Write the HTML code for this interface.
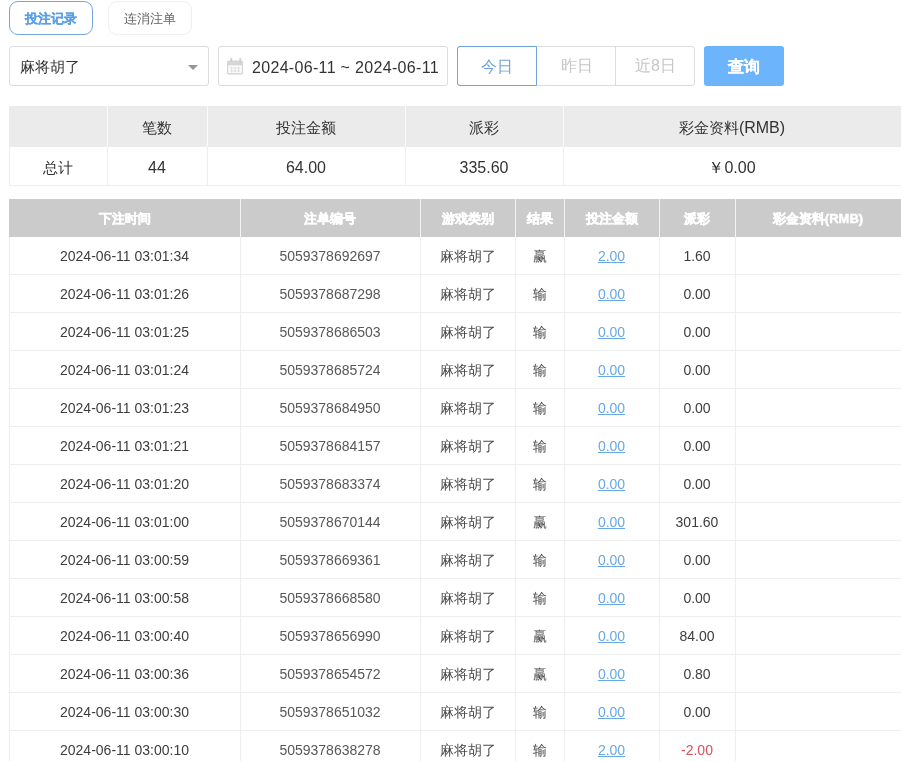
<!DOCTYPE html>
<html><head><meta charset="utf-8">
<style>
*{box-sizing:border-box;margin:0;padding:0}
html,body{width:901px;height:761px;overflow:hidden;background:#fff;}
body{will-change:transform;font-family:"Liberation Sans",sans-serif;color:#333}
.abs{position:absolute}
.tab{position:absolute;top:1px;height:34px;width:84px;border-radius:9px;text-align:center;line-height:33px;font-size:13px}
.tab1{left:9px;border:1px solid #74a6da;color:#5d9fe3;font-weight:bold;-webkit-text-stroke:0.2px #5d9fe3}
.tab2{left:108px;border:1px solid #efefef;color:#666}
.box{position:absolute;top:46px;height:40px;border:1px solid #dcdcdc;border-radius:3px;background:#fff}
.sel{left:9px;width:200px}
.sel span{position:absolute;left:10px;top:1px;line-height:38px;font-size:15px;color:#333}
.tri{position:absolute;left:178px;top:18px;width:0;height:0;border-left:5px solid transparent;border-right:5px solid transparent;border-top:5px solid #959595}
.date{left:218px;width:230px}
.date span{position:absolute;left:33px;top:2px;line-height:38px;font-size:16px;letter-spacing:0.32px;color:#333;white-space:nowrap}
.cal{position:absolute;left:8px;top:11px}
.grp{position:absolute;top:46px;left:457px;height:40px;width:238px;border:1px solid #dcdcdc;border-radius:3px}
.b{position:absolute;top:-1px;height:40px;text-align:center;line-height:39px;font-size:16px;color:#c6c6c6}
.b1{left:-1px;width:80px;border:1px solid #6fa5dc;color:#6fa5dc;border-radius:3px 0 0 3px}
.b2{left:79px;width:79px}
.b3{left:157px;width:80px;border-left:1px solid #dcdcdc}
.q{position:absolute;left:704px;top:46px;width:80px;height:40px;background:#6cb5fd;border-radius:3px;color:#fff;font-weight:bold;font-size:16px;text-align:center;line-height:41px;-webkit-text-stroke:0.3px #fff}
.sumh{background:#ebebeb}
.deth{background:#cbcbcb}
.vl,.vl-h,.vl-d{width:1px}
.vl{background:#eeeeee}
.vl-h{background:#fbfbfb}
.vl-d{background:#f4f4f4}
.hl{height:1px;background:#eeeeee}
.st{text-align:center;font-size:16px;color:#333;white-space:nowrap}
.dt{text-align:center;font-size:14px;color:#3d3d3d;white-space:nowrap;line-height:38px}
.dth{color:#fff;font-weight:bold;font-size:13px;-webkit-text-stroke:0.45px #fff;line-height:39px !important}
.dt.num{color:#585858}
.lk{color:#68a9e3;text-decoration:underline}
.dt.neg{color:#d9505a}
.st .c{font-size:15px}
.dt.cjk{font-size:13.5px;color:#4a4a4a;line-height:39px}
</style></head><body>
<div class="tab tab1">投注记录</div>
<div class="tab tab2">连消注单</div>
<div class="box sel"><span>麻将胡了</span><div class="tri"></div></div>
<div class="box date"><svg class="cal" width="16" height="17" viewBox="0 0 16 17"><rect x="0" y="2.5" width="16" height="14" rx="1.5" fill="#d6d6d6"/><rect x="1.3" y="7.4" width="13.4" height="7.6" fill="#fff"/><g fill="#e2e2e2"><rect x="4" y="8.5" width="1.2" height="6"/><rect x="7.5" y="8.5" width="1.2" height="6"/><rect x="11" y="8.5" width="1.2" height="6"/><rect x="2.5" y="9.5" width="11" height="1"/><rect x="2.5" y="12.5" width="11" height="1"/></g><rect x="3.3" y="0" width="2" height="4.5" rx="1" fill="#d0d0d0"/><rect x="12.3" y="0" width="2" height="4.5" rx="1" fill="#d0d0d0"/></svg><span>2024-06-11 ~ 2024-06-11</span></div>
<div class="grp"><div class="b b1">今日</div><div class="b b2">昨日</div><div class="b b3">近8日</div></div>
<div class="q">查询</div>

<div class="abs sumh" style="left:9px;top:106px;width:892px;height:41px"></div>
<div class="abs vl-h" style="left:107px;top:106px;height:41px"></div>
<div class="abs vl" style="left:107px;top:147px;height:39px"></div>
<div class="abs vl-h" style="left:207px;top:106px;height:41px"></div>
<div class="abs vl" style="left:207px;top:147px;height:39px"></div>
<div class="abs vl-h" style="left:405px;top:106px;height:41px"></div>
<div class="abs vl" style="left:405px;top:147px;height:39px"></div>
<div class="abs vl-h" style="left:563px;top:106px;height:41px"></div>
<div class="abs vl" style="left:563px;top:147px;height:39px"></div>
<div class="abs vl" style="left:9px;top:147px;height:39px"></div>
<div class="abs hl" style="left:9px;top:185px;width:892px"></div>
<div class="abs st str" style="left:9px;top:147px;width:98px;height:39px;line-height:41px"><span class="c">总计</span></div>
<div class="abs st sth" style="left:107px;top:106px;width:100px;height:41px;line-height:43px"><span class="c">笔数</span></div>
<div class="abs st str" style="left:107px;top:147px;width:100px;height:39px;line-height:41px">44</div>
<div class="abs st sth" style="left:207px;top:106px;width:198px;height:41px;line-height:43px"><span class="c">投注金额</span></div>
<div class="abs st str" style="left:207px;top:147px;width:198px;height:39px;line-height:41px">64.00</div>
<div class="abs st sth" style="left:405px;top:106px;width:158px;height:41px;line-height:43px"><span class="c">派彩</span></div>
<div class="abs st str" style="left:405px;top:147px;width:158px;height:39px;line-height:41px">335.60</div>
<div class="abs st sth" style="left:563px;top:106px;width:338px;height:41px;line-height:43px"><span class="c">彩金资料</span>(RMB)</div>
<div class="abs st str" style="left:563px;top:147px;width:338px;height:39px;line-height:41px">￥0.00</div>
<div class="abs deth" style="left:9px;top:199px;width:892px;height:38px"></div>
<div class="abs vl-d" style="left:240px;top:199px;height:38px"></div>
<div class="abs vl" style="left:240px;top:237px;height:524px"></div>
<div class="abs vl-d" style="left:420px;top:199px;height:38px"></div>
<div class="abs vl" style="left:420px;top:237px;height:524px"></div>
<div class="abs vl-d" style="left:515px;top:199px;height:38px"></div>
<div class="abs vl" style="left:515px;top:237px;height:524px"></div>
<div class="abs vl-d" style="left:564px;top:199px;height:38px"></div>
<div class="abs vl" style="left:564px;top:237px;height:524px"></div>
<div class="abs vl-d" style="left:659px;top:199px;height:38px"></div>
<div class="abs vl" style="left:659px;top:237px;height:524px"></div>
<div class="abs vl-d" style="left:735px;top:199px;height:38px"></div>
<div class="abs vl" style="left:735px;top:237px;height:524px"></div>
<div class="abs vl" style="left:9px;top:237px;height:524px"></div>
<div class="abs hl" style="left:9px;top:274px;width:892px"></div>
<div class="abs hl" style="left:9px;top:312px;width:892px"></div>
<div class="abs hl" style="left:9px;top:350px;width:892px"></div>
<div class="abs hl" style="left:9px;top:388px;width:892px"></div>
<div class="abs hl" style="left:9px;top:426px;width:892px"></div>
<div class="abs hl" style="left:9px;top:464px;width:892px"></div>
<div class="abs hl" style="left:9px;top:502px;width:892px"></div>
<div class="abs hl" style="left:9px;top:540px;width:892px"></div>
<div class="abs hl" style="left:9px;top:578px;width:892px"></div>
<div class="abs hl" style="left:9px;top:616px;width:892px"></div>
<div class="abs hl" style="left:9px;top:654px;width:892px"></div>
<div class="abs hl" style="left:9px;top:692px;width:892px"></div>
<div class="abs hl" style="left:9px;top:730px;width:892px"></div>
<div class="abs hl" style="left:9px;top:768px;width:892px"></div>
<div class="abs dt dth" style="left:9px;top:199px;width:231px;height:38px;line-height:38px">下注时间</div>
<div class="abs dt dth" style="left:240px;top:199px;width:180px;height:38px;line-height:38px">注单编号</div>
<div class="abs dt dth" style="left:420px;top:199px;width:95px;height:38px;line-height:38px">游戏类别</div>
<div class="abs dt dth" style="left:515px;top:199px;width:49px;height:38px;line-height:38px">结果</div>
<div class="abs dt dth" style="left:564px;top:199px;width:95px;height:38px;line-height:38px">投注金额</div>
<div class="abs dt dth" style="left:659px;top:199px;width:76px;height:38px;line-height:38px">派彩</div>
<div class="abs dt dth" style="left:735px;top:199px;width:166px;height:38px;line-height:38px">彩金资料(RMB)</div>
<div class="abs dt" style="left:9px;top:237px;width:231px;height:37px">2024-06-11 03:01:34</div>
<div class="abs dt num" style="left:240px;top:237px;width:180px;height:37px">5059378692697</div>
<div class="abs dt cjk" style="left:420px;top:237px;width:95px;height:37px">麻将胡了</div>
<div class="abs dt cjk" style="left:515px;top:237px;width:49px;height:37px">赢</div>
<div class="abs dt" style="left:564px;top:237px;width:95px;height:37px"><span class="lk">2.00</span></div>
<div class="abs dt" style="left:659px;top:237px;width:76px;height:37px">1.60</div>
<div class="abs dt" style="left:9px;top:275px;width:231px;height:37px">2024-06-11 03:01:26</div>
<div class="abs dt num" style="left:240px;top:275px;width:180px;height:37px">5059378687298</div>
<div class="abs dt cjk" style="left:420px;top:275px;width:95px;height:37px">麻将胡了</div>
<div class="abs dt cjk" style="left:515px;top:275px;width:49px;height:37px">输</div>
<div class="abs dt" style="left:564px;top:275px;width:95px;height:37px"><span class="lk">0.00</span></div>
<div class="abs dt" style="left:659px;top:275px;width:76px;height:37px">0.00</div>
<div class="abs dt" style="left:9px;top:313px;width:231px;height:37px">2024-06-11 03:01:25</div>
<div class="abs dt num" style="left:240px;top:313px;width:180px;height:37px">5059378686503</div>
<div class="abs dt cjk" style="left:420px;top:313px;width:95px;height:37px">麻将胡了</div>
<div class="abs dt cjk" style="left:515px;top:313px;width:49px;height:37px">输</div>
<div class="abs dt" style="left:564px;top:313px;width:95px;height:37px"><span class="lk">0.00</span></div>
<div class="abs dt" style="left:659px;top:313px;width:76px;height:37px">0.00</div>
<div class="abs dt" style="left:9px;top:351px;width:231px;height:37px">2024-06-11 03:01:24</div>
<div class="abs dt num" style="left:240px;top:351px;width:180px;height:37px">5059378685724</div>
<div class="abs dt cjk" style="left:420px;top:351px;width:95px;height:37px">麻将胡了</div>
<div class="abs dt cjk" style="left:515px;top:351px;width:49px;height:37px">输</div>
<div class="abs dt" style="left:564px;top:351px;width:95px;height:37px"><span class="lk">0.00</span></div>
<div class="abs dt" style="left:659px;top:351px;width:76px;height:37px">0.00</div>
<div class="abs dt" style="left:9px;top:389px;width:231px;height:37px">2024-06-11 03:01:23</div>
<div class="abs dt num" style="left:240px;top:389px;width:180px;height:37px">5059378684950</div>
<div class="abs dt cjk" style="left:420px;top:389px;width:95px;height:37px">麻将胡了</div>
<div class="abs dt cjk" style="left:515px;top:389px;width:49px;height:37px">输</div>
<div class="abs dt" style="left:564px;top:389px;width:95px;height:37px"><span class="lk">0.00</span></div>
<div class="abs dt" style="left:659px;top:389px;width:76px;height:37px">0.00</div>
<div class="abs dt" style="left:9px;top:427px;width:231px;height:37px">2024-06-11 03:01:21</div>
<div class="abs dt num" style="left:240px;top:427px;width:180px;height:37px">5059378684157</div>
<div class="abs dt cjk" style="left:420px;top:427px;width:95px;height:37px">麻将胡了</div>
<div class="abs dt cjk" style="left:515px;top:427px;width:49px;height:37px">输</div>
<div class="abs dt" style="left:564px;top:427px;width:95px;height:37px"><span class="lk">0.00</span></div>
<div class="abs dt" style="left:659px;top:427px;width:76px;height:37px">0.00</div>
<div class="abs dt" style="left:9px;top:465px;width:231px;height:37px">2024-06-11 03:01:20</div>
<div class="abs dt num" style="left:240px;top:465px;width:180px;height:37px">5059378683374</div>
<div class="abs dt cjk" style="left:420px;top:465px;width:95px;height:37px">麻将胡了</div>
<div class="abs dt cjk" style="left:515px;top:465px;width:49px;height:37px">输</div>
<div class="abs dt" style="left:564px;top:465px;width:95px;height:37px"><span class="lk">0.00</span></div>
<div class="abs dt" style="left:659px;top:465px;width:76px;height:37px">0.00</div>
<div class="abs dt" style="left:9px;top:503px;width:231px;height:37px">2024-06-11 03:01:00</div>
<div class="abs dt num" style="left:240px;top:503px;width:180px;height:37px">5059378670144</div>
<div class="abs dt cjk" style="left:420px;top:503px;width:95px;height:37px">麻将胡了</div>
<div class="abs dt cjk" style="left:515px;top:503px;width:49px;height:37px">赢</div>
<div class="abs dt" style="left:564px;top:503px;width:95px;height:37px"><span class="lk">0.00</span></div>
<div class="abs dt" style="left:659px;top:503px;width:76px;height:37px">301.60</div>
<div class="abs dt" style="left:9px;top:541px;width:231px;height:37px">2024-06-11 03:00:59</div>
<div class="abs dt num" style="left:240px;top:541px;width:180px;height:37px">5059378669361</div>
<div class="abs dt cjk" style="left:420px;top:541px;width:95px;height:37px">麻将胡了</div>
<div class="abs dt cjk" style="left:515px;top:541px;width:49px;height:37px">输</div>
<div class="abs dt" style="left:564px;top:541px;width:95px;height:37px"><span class="lk">0.00</span></div>
<div class="abs dt" style="left:659px;top:541px;width:76px;height:37px">0.00</div>
<div class="abs dt" style="left:9px;top:579px;width:231px;height:37px">2024-06-11 03:00:58</div>
<div class="abs dt num" style="left:240px;top:579px;width:180px;height:37px">5059378668580</div>
<div class="abs dt cjk" style="left:420px;top:579px;width:95px;height:37px">麻将胡了</div>
<div class="abs dt cjk" style="left:515px;top:579px;width:49px;height:37px">输</div>
<div class="abs dt" style="left:564px;top:579px;width:95px;height:37px"><span class="lk">0.00</span></div>
<div class="abs dt" style="left:659px;top:579px;width:76px;height:37px">0.00</div>
<div class="abs dt" style="left:9px;top:617px;width:231px;height:37px">2024-06-11 03:00:40</div>
<div class="abs dt num" style="left:240px;top:617px;width:180px;height:37px">5059378656990</div>
<div class="abs dt cjk" style="left:420px;top:617px;width:95px;height:37px">麻将胡了</div>
<div class="abs dt cjk" style="left:515px;top:617px;width:49px;height:37px">赢</div>
<div class="abs dt" style="left:564px;top:617px;width:95px;height:37px"><span class="lk">0.00</span></div>
<div class="abs dt" style="left:659px;top:617px;width:76px;height:37px">84.00</div>
<div class="abs dt" style="left:9px;top:655px;width:231px;height:37px">2024-06-11 03:00:36</div>
<div class="abs dt num" style="left:240px;top:655px;width:180px;height:37px">5059378654572</div>
<div class="abs dt cjk" style="left:420px;top:655px;width:95px;height:37px">麻将胡了</div>
<div class="abs dt cjk" style="left:515px;top:655px;width:49px;height:37px">赢</div>
<div class="abs dt" style="left:564px;top:655px;width:95px;height:37px"><span class="lk">0.00</span></div>
<div class="abs dt" style="left:659px;top:655px;width:76px;height:37px">0.80</div>
<div class="abs dt" style="left:9px;top:693px;width:231px;height:37px">2024-06-11 03:00:30</div>
<div class="abs dt num" style="left:240px;top:693px;width:180px;height:37px">5059378651032</div>
<div class="abs dt cjk" style="left:420px;top:693px;width:95px;height:37px">麻将胡了</div>
<div class="abs dt cjk" style="left:515px;top:693px;width:49px;height:37px">输</div>
<div class="abs dt" style="left:564px;top:693px;width:95px;height:37px"><span class="lk">0.00</span></div>
<div class="abs dt" style="left:659px;top:693px;width:76px;height:37px">0.00</div>
<div class="abs dt" style="left:9px;top:731px;width:231px;height:37px">2024-06-11 03:00:10</div>
<div class="abs dt num" style="left:240px;top:731px;width:180px;height:37px">5059378638278</div>
<div class="abs dt cjk" style="left:420px;top:731px;width:95px;height:37px">麻将胡了</div>
<div class="abs dt cjk" style="left:515px;top:731px;width:49px;height:37px">输</div>
<div class="abs dt" style="left:564px;top:731px;width:95px;height:37px"><span class="lk">2.00</span></div>
<div class="abs dt neg" style="left:659px;top:731px;width:76px;height:37px">-2.00</div>
</body></html>
